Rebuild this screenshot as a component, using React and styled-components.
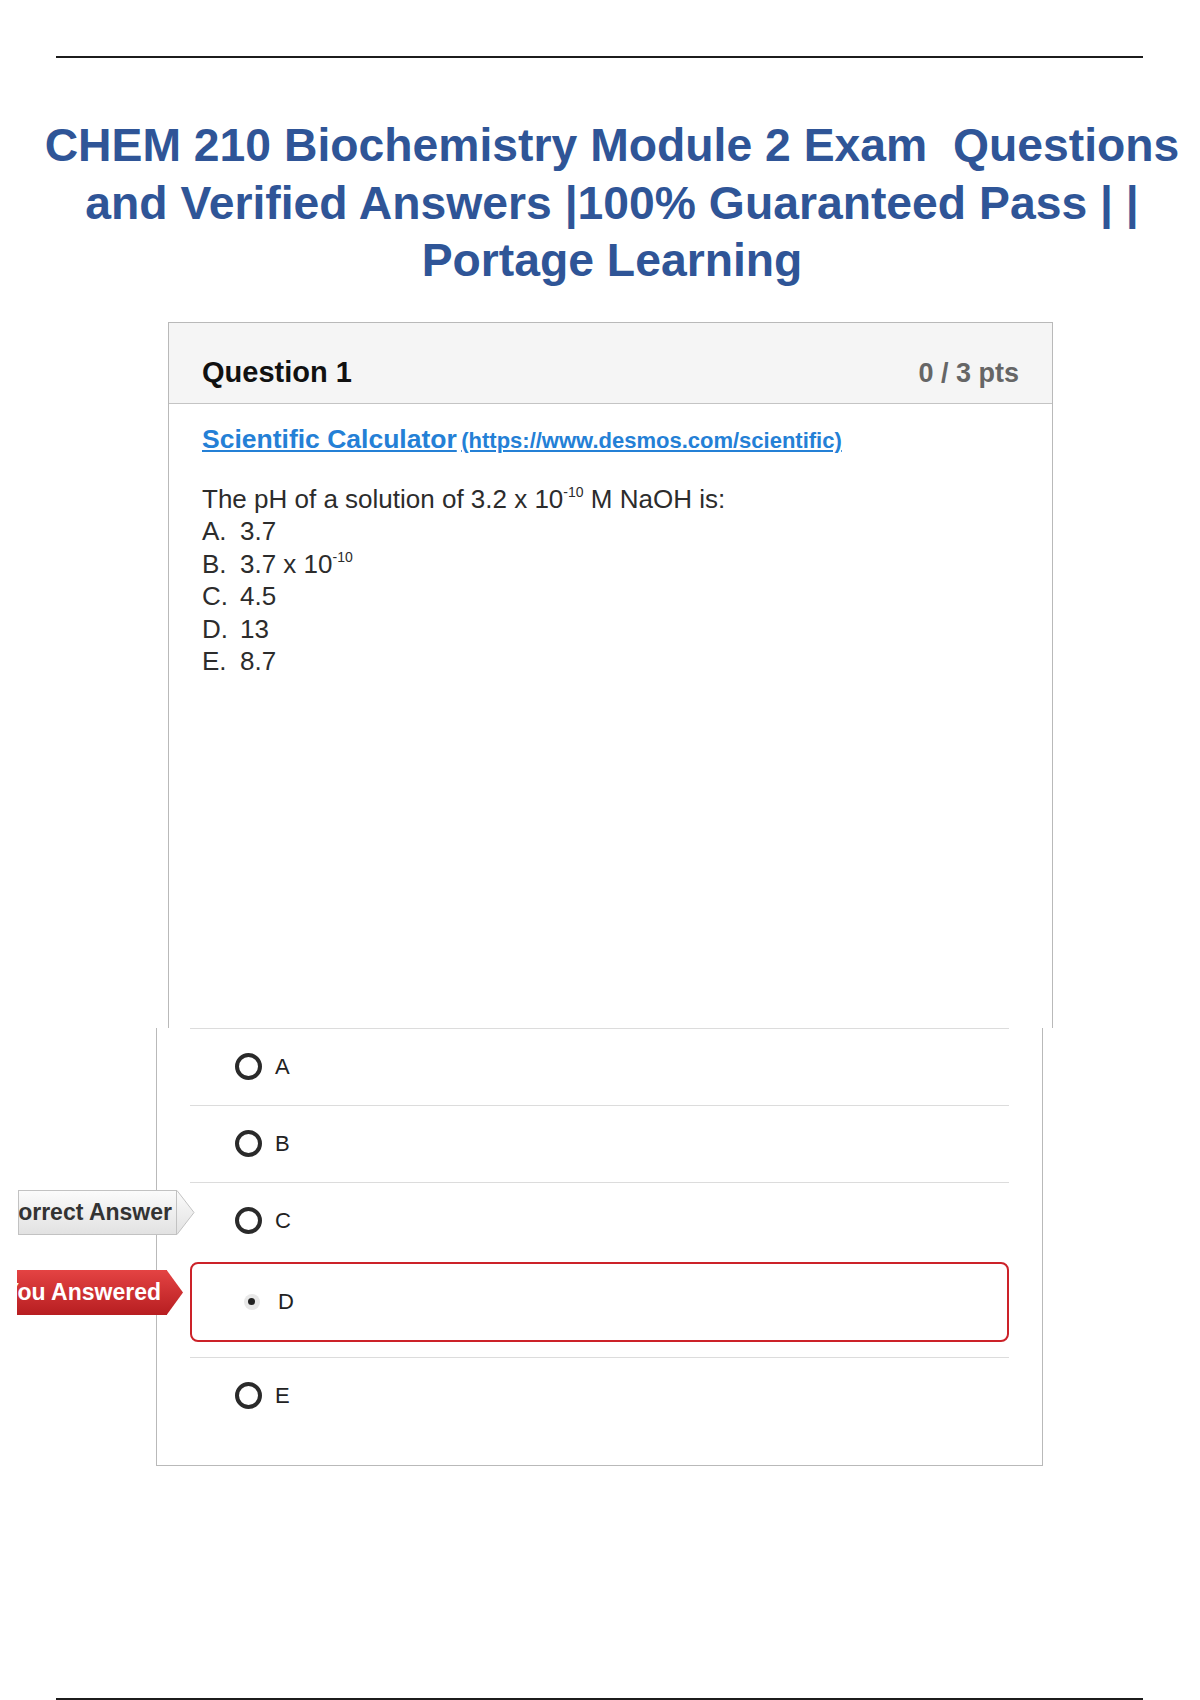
import styled, { createGlobalStyle } from "styled-components";

const GlobalStyle = createGlobalStyle`
  html, body {
    margin: 0;
    padding: 0;
    background: #ffffff;
  }
  body {
    font-family: "Liberation Sans", Arial, sans-serif;
  }
`;

const Page = styled.div`
  width: 1200px;
  min-height: 1700px;
  background: #fff;
  overflow: hidden;
`;

const Rule = styled.hr`
  width: 1087px;
  height: 2px;
  margin: ${(props) => props.top}px 0 0 56px;
  border: none;
  background: #1c1c1c;
`;

const Title = styled.h1`
  margin: 59px 0 0 0;
  padding-left: 24px;
  font-size: 46.3px;
  line-height: 57.5px;
  font-weight: 700;
  color: #2f5597;
  text-align: center;
  white-space: nowrap;
`;

const QuestionCard = styled.section`
  width: 885px;
  margin: 32px 0 0 168px;
  box-sizing: border-box;
  border: 1px solid #b9b9b9;
  border-bottom: none;
`;

const CardHeader = styled.header`
  display: flex;
  justify-content: space-between;
  align-items: baseline;
  padding: 31px 33px 12px;
  background: #f5f5f5;
  border-bottom: 1px solid #c4c4c4;
`;

const QuestionName = styled.span`
  font-size: 29px;
  line-height: 36px;
  font-weight: 700;
  color: #111;
`;

const Points = styled.span`
  font-size: 27px;
  line-height: 36px;
  font-weight: 700;
  color: #666;
`;

const CardBody = styled.div`
  box-sizing: border-box;
  height: 624px;
  padding: 19px 33px 0;
  color: #2c2c2c;
`;

const LinkLine = styled.div`
  line-height: 32px;
`;

const CalcLink = styled.a`
  font-size: 26.5px;
  font-weight: 700;
  color: #2480d6;
  text-decoration: underline;
`;

const LinkUrl = styled.a`
  font-size: 22px;
  font-weight: 700;
  color: #2480d6;
  text-decoration: underline;
`;

const Prompt = styled.p`
  margin: 24px 0 0;
  font-size: 26px;
  line-height: 32.6px;
`;

const Sup = styled.sup`
  font-size: 14px;
  line-height: 0;
  vertical-align: 11px;
`;

const ChoiceList = styled.ol`
  margin: 0;
  padding: 0;
  list-style: none;
`;

const Choice = styled.li`
  display: flex;
  font-size: 26px;
  line-height: 32.6px;
`;

const ChoiceMark = styled.span`
  width: 38px;
  flex: none;
`;

const AnswersPanel = styled.div`
  width: 887px;
  margin-left: 156px;
  box-sizing: border-box;
  padding: 0 33px 31px;
  border: 1px solid #b9b9b9;
  border-top: none;
`;

const AnswerRow = styled.div`
  position: relative;
  display: flex;
  align-items: center;
  box-sizing: border-box;
  height: ${(props) => (props.wrong ? 80 : 77)}px;
  margin-top: ${(props) => props.gap || 0}px;
  padding-left: ${(props) => (props.wrong ? 46 : 45)}px;
  border-top: ${(props) => (props.line ? "1px solid #dcdcdc" : "none")};
  ${(props) =>
    props.wrong &&
    `
    border: 2px solid #cc2229;
    border-radius: 8px;
  `}
`;

const Radio = styled.span`
  width: 27px;
  height: 27px;
  flex: none;
  box-sizing: border-box;
  border: 4px solid #2a2a2a;
  border-radius: 50%;
  background: #fff;
`;

const PickedRadio = styled.span`
  width: 27px;
  height: 27px;
  flex: none;
  display: flex;
  align-items: center;
  justify-content: center;
`;

const PickedHalo = styled.span`
  width: 16px;
  height: 16px;
  border-radius: 50%;
  background: #e8e8e8;
  display: flex;
  align-items: center;
  justify-content: center;

  &::after {
    content: "";
    width: 7px;
    height: 7px;
    border-radius: 50%;
    background: #222;
  }
`;

const AnswerText = styled.span`
  margin-left: 13px;
  font-size: 22px;
  color: #222;
`;

const Tag = styled.div`
  position: absolute;
  left: ${(props) => props.left}px;
  top: ${(props) => props.top}px;
  display: flex;
  height: 45px;
`;

const TagBody = styled.div`
  width: ${(props) => props.width}px;
  box-sizing: border-box;
  display: flex;
  align-items: center;
  justify-content: flex-end;
  overflow: hidden;
  white-space: nowrap;
  padding-right: ${(props) => (props.red ? 6 : 4)}px;
  font-size: 23px;
  font-weight: 700;
  color: ${(props) => (props.red ? "#fff" : "#333")};
  background: ${(props) =>
    props.red
      ? "linear-gradient(#e44343, #b71e21)"
      : "linear-gradient(#fbfbfb, #e2e2e2)"};
  border: ${(props) => (props.red ? "none" : "1px solid #c2c2c2")};
`;

const TagArrow = ({ red, width }) => (
  <svg width={width} height="45" viewBox={`0 0 ${width} 45`}>
    <defs>
      <linearGradient id={red ? "redTag" : "grayTag"} x1="0" y1="0" x2="0" y2="1">
        <stop offset="0" stopColor={red ? "#e44343" : "#fbfbfb"} />
        <stop offset="1" stopColor={red ? "#b71e21" : "#e2e2e2"} />
      </linearGradient>
    </defs>
    <polygon
      points={`0,0.5 ${width - 1},22.5 0,44.5`}
      fill={`url(#${red ? "redTag" : "grayTag"})`}
    />
    {!red && (
      <polyline
        points={`0,0.5 ${width - 1},22.5 0,44.5`}
        fill="none"
        stroke="#c2c2c2"
        strokeWidth="1"
      />
    )}
  </svg>
);

const answers = ["A", "B", "C", "D", "E"];

export default function App() {
  return (
    <Page>
      <GlobalStyle />
      <Rule top={56} />
      <Title>
        CHEM 210 Biochemistry Module 2 Exam{"\u00a0"} Questions
        <br />
        and Verified Answers |100% Guaranteed Pass | |
        <br />
        Portage Learning
      </Title>

      <QuestionCard>
        <CardHeader>
          <QuestionName>Question 1</QuestionName>
          <Points>0 / 3 pts</Points>
        </CardHeader>
        <CardBody>
          <LinkLine>
            <CalcLink href="#">Scientific Calculator</CalcLink>{" "}
            <LinkUrl href="#">(https://www.desmos.com/scientific)</LinkUrl>
          </LinkLine>
          <Prompt>
            The pH of a solution of 3.2 x 10<Sup>-10</Sup> M NaOH is:
          </Prompt>
          <ChoiceList>
            <Choice>
              <ChoiceMark>A.</ChoiceMark>3.7
            </Choice>
            <Choice>
              <ChoiceMark>B.</ChoiceMark>
              <span>
                3.7 x 10<Sup>-10</Sup>
              </span>
            </Choice>
            <Choice>
              <ChoiceMark>C.</ChoiceMark>4.5
            </Choice>
            <Choice>
              <ChoiceMark>D.</ChoiceMark>13
            </Choice>
            <Choice>
              <ChoiceMark>E.</ChoiceMark>8.7
            </Choice>
          </ChoiceList>
        </CardBody>
      </QuestionCard>

      <AnswersPanel>
        {answers.map((letter) => {
          const wrong = letter === "D";
          return (
            <AnswerRow
              key={letter}
              wrong={wrong}
              line={!wrong}
              gap={wrong ? 3 : letter === "E" ? 15 : 0}
            >
              {letter === "C" && (
                <Tag left={-172} top={7}>
                  <TagBody width={159}>Correct Answer</TagBody>
                  <TagArrow width={18} />
                </Tag>
              )}
              {wrong && (
                <Tag left={-175} top={6}>
                  <TagBody red width={150}>
                    You Answered
                  </TagBody>
                  <TagArrow red width={17} />
                </Tag>
              )}
              {wrong ? (
                <PickedRadio>
                  <PickedHalo />
                </PickedRadio>
              ) : (
                <Radio />
              )}
              <AnswerText>{letter}</AnswerText>
            </AnswerRow>
          );
        })}
      </AnswersPanel>

      <Rule top={232} />
    </Page>
  );
}
